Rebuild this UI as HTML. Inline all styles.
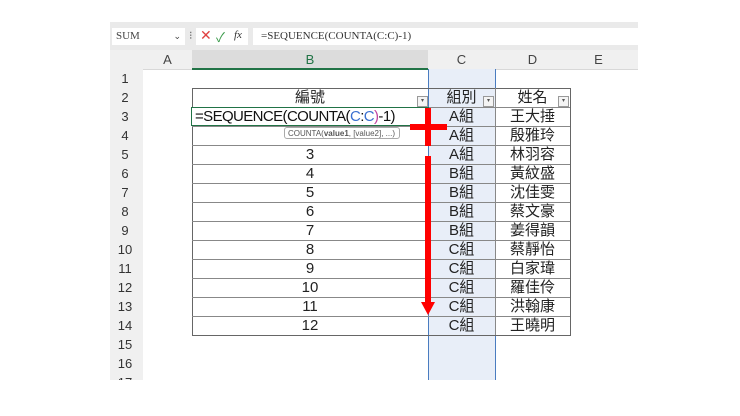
<!DOCTYPE html>
<html><head><meta charset="utf-8"><style>
body{margin:0;width:740px;height:416px;background:#fff;position:relative;overflow:hidden;font-family:"Liberation Sans","Noto Sans CJK TC",sans-serif}
.a{position:absolute}
.rh{position:absolute;left:110px;width:30px;height:19px;background:#f0f0f0;color:#333;font-size:13px;text-align:center;line-height:19px}
.c{position:absolute;text-align:center;font-size:15px;color:#222;line-height:19px;height:19px}
.dd{position:absolute;width:9px;height:9px;border:1px solid #999;background:#f4f4f4;font-size:6px;line-height:9px;text-align:center;color:#555}
</style></head><body>
<div class="a" style="left:110px;top:22px;width:528px;height:28px;background:#eaeaea"></div>
<div class="a" style="left:112px;top:28px;width:73px;height:17px;background:#fff;font-family:'Liberation Serif',serif;font-size:11px;line-height:17px;color:#444;padding-left:4px;box-sizing:border-box">SUM<span style="position:absolute;right:4px;font-size:9px">⌄</span></div>
<div class="a" style="left:189px;top:29px;font-size:11px;color:#666">⁝</div>
<div class="a" style="left:196px;top:28px;width:52px;height:17px;background:#fff"></div>
<div class="a" style="left:200px;top:27px;font-size:14px;color:#e04040">✕</div>
<div class="a" style="left:216px;top:27px;font-size:13px;color:#3a9a4a">✓</div>
<div class="a" style="left:234px;top:29px;font-size:11px;font-style:italic;font-family:'Liberation Serif',serif;color:#333"><i>fx</i></div>
<div class="a" style="left:253px;top:28px;width:385px;height:17px;background:#fff;font-family:'Liberation Serif',serif;font-size:11px;line-height:17px;color:#333;padding-left:8px;box-sizing:border-box">=SEQUENCE(COUNTA(C:C)-1)</div>
<div class="a" style="left:110px;top:50px;width:528px;height:19px;background:#f0f0f0;border-bottom:1px solid #d8d8d8"></div>
<div class="a" style="left:192px;top:50px;width:236px;height:18px;background:#dcdcdc;border-bottom:2px solid #217346"></div>
<div class="c" style="left:143px;top:50px;width:49px;font-size:13px;color:#444">A</div>
<div class="c" style="left:192px;top:50px;width:236px;font-size:13px;color:#217346">B</div>
<div class="c" style="left:428px;top:50px;width:67px;font-size:13px;color:#444">C</div>
<div class="c" style="left:495px;top:50px;width:75px;font-size:13px;color:#444">D</div>
<div class="c" style="left:570px;top:50px;width:57px;font-size:13px;color:#444">E</div>
<div class="a" style="left:110px;top:69px;width:33px;height:311px;background:#f0f0f0"></div>
<div class="rh" style="top:69px">1</div><div class="rh" style="top:88px">2</div><div class="rh" style="top:107px">3</div><div class="rh" style="top:126px">4</div><div class="rh" style="top:145px">5</div><div class="rh" style="top:164px">6</div><div class="rh" style="top:183px">7</div><div class="rh" style="top:202px">8</div><div class="rh" style="top:221px">9</div><div class="rh" style="top:240px">10</div><div class="rh" style="top:259px">11</div><div class="rh" style="top:278px">12</div><div class="rh" style="top:297px">13</div><div class="rh" style="top:316px">14</div><div class="rh" style="top:335px">15</div><div class="rh" style="top:354px">16</div><div class="rh" style="top:373px;height:7px;overflow:hidden">17</div>
<div class="a" style="left:428px;top:69px;width:66px;height:311px;background:#e8eef8;border-left:1px solid #4a7cc0;border-right:1px solid #4a7cc0"></div>
<div class="a" style="left:192px;top:88px;width:377px;height:246px;border:1px solid #666;box-sizing:content-box"></div>
<div id="rows"></div>
<script>
var n=['編號','=','','3','4','5','6','7','8','9','10','11','12'];
var g=['組別','A組','A組','A組','B組','B組','B組','B組','C組','C組','C組','C組','C組'];
var m=['姓名','王大捶','殷雅玲','林羽容','黃紋盛','沈佳雯','蔡文豪','姜得韻','蔡靜怡','白家瑋','羅佳伶','洪翰康','王曉明'];
var h='';
for(var i=0;i<13;i++){var t=88+i*19;
if(i>0)h+='<div class="a" style="left:192px;top:'+t+'px;width:378px;height:1px;background:#888"></div>';
if(i!=1&&i!=2)h+='<div class="c" style="left:192px;top:'+t+'px;width:236px">'+n[i]+'</div>';
h+='<div class="c" style="left:428px;top:'+t+'px;width:67px">'+g[i]+'</div>';
h+='<div class="c" style="left:495px;top:'+t+'px;width:75px">'+m[i]+'</div>';}
document.getElementById('rows').innerHTML=h;
</script>
<div class="a" style="left:495px;top:88px;width:1px;height:247px;background:#888"></div>
<div class="dd" style="left:417px;top:96px">▾</div><div class="dd" style="left:483px;top:96px">▾</div><div class="dd" style="left:558px;top:96px">▾</div>
<div class="a" style="left:191px;top:107px;width:236px;height:17px;border:1px solid #217346;background:#fff"></div>
<div class="a" style="left:195px;top:107px;font-size:15px;line-height:19px;color:#111;letter-spacing:-0.6px">=SEQUENCE(COUNTA(<span style="color:#3a6fd0">C</span>:<span style="color:#3a6fd0">C</span><span style="color:#c040a0">)</span>-1)</div>
<div class="a" style="left:284px;top:127px;width:116px;height:12px;border:1px solid #aaa;border-radius:3px;background:#fff;font-size:8px;line-height:12px;color:#555;padding-left:3px;box-sizing:border-box">COUNTA(<b>value1</b>, [value2], ...)</div>
<div class="a" style="left:425px;top:108px;width:6px;height:38px;background:#f00"></div>
<div class="a" style="left:410px;top:124px;width:37px;height:6px;background:#f00"></div>
<div class="a" style="left:425px;top:156px;width:6px;height:148px;background:#f00"></div>
<div class="a" style="left:421px;top:302px;width:0;height:0;border-left:7px solid transparent;border-right:7px solid transparent;border-top:13px solid #f00"></div>
</body></html>
